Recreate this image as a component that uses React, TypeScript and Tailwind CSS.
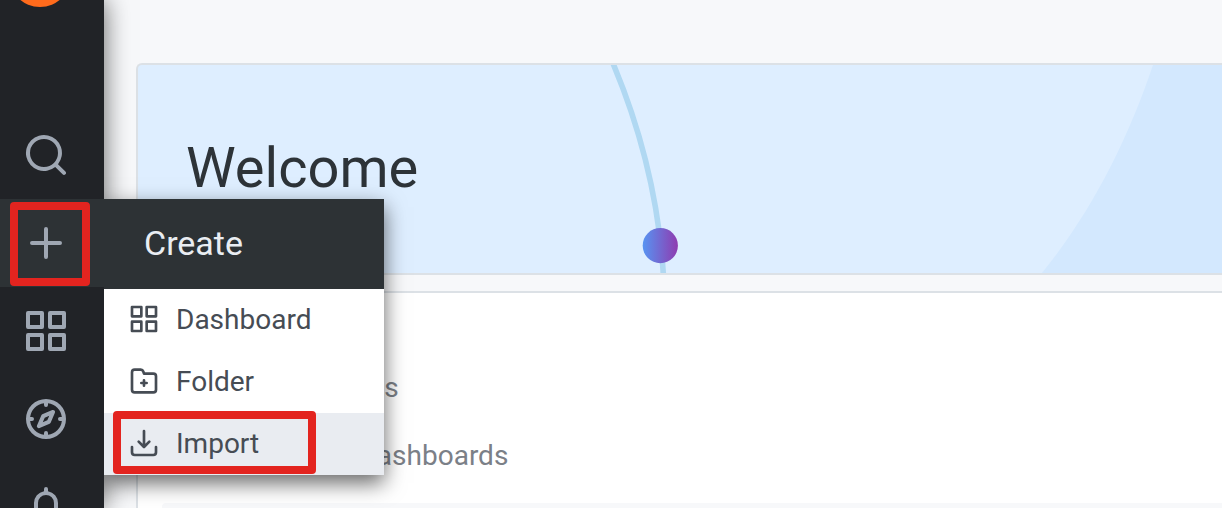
import React from "react";

const icons = {
  search:
    "M21.71,20.29,18,16.61A9,9,0,1,0,16.61,18l3.68,3.68a1,1,0,0,0,1.42,0A1,1,0,0,0,21.71,20.29ZM11,18a7,7,0,1,1,7-7A7,7,0,0,1,11,18Z",
  plus: "M19,11H13V5a1,1,0,0,0-2,0v6H5a1,1,0,0,0,0,2h6v6a1,1,0,0,0,2,0V13h6a1,1,0,0,0,0-2Z",
  apps: "M10,13H3a1,1,0,0,0-1,1v7a1,1,0,0,0,1,1h7a1,1,0,0,0,1-1V14A1,1,0,0,0,10,13ZM9,20H4V15H9ZM21,2H14a1,1,0,0,0-1,1v7a1,1,0,0,0,1,1h7a1,1,0,0,0,1-1V3A1,1,0,0,0,21,2ZM20,9H15V4h5Zm1,4H14a1,1,0,0,0-1,1v7a1,1,0,0,0,1,1h7a1,1,0,0,0,1-1V14A1,1,0,0,0,21,13Zm-1,7H15V15h5ZM10,2H3A1,1,0,0,0,2,3v7a1,1,0,0,0,1,1h7a1,1,0,0,0,1-1V3A1,1,0,0,0,10,2ZM9,9H4V4H9Z",
  compass:
    "M12,2A10,10,0,1,0,22,12,10,10,0,0,0,12,2Zm1,17.93V19a1,1,0,0,0-2,0v.93A8,8,0,0,1,4.07,13H5a1,1,0,0,0,0-2H4.07A8,8,0,0,1,11,4.07V5a1,1,0,0,0,2,0V4.07A8,8,0,0,1,19.93,11H19a1,1,0,0,0,0,2h.93A8,8,0,0,1,13,19.93ZM15.14,7.55l-5,2.12a1,1,0,0,0-.52.52l-2.12,5a1,1,0,0,0,.21,1.1,1,1,0,0,0,.7.29.93.93,0,0,0,.4-.08l5-2.12a1,1,0,0,0,.52-.52l2.12-5a1,1,0,0,0-1.31-1.31Zm-2.49,5.1-2.28,1,1-2.28,2.28-1Z",
  bell: "M18,13.18V10a6,6,0,0,0-5-5.91V3a1,1,0,0,0-2,0V4.09A6,6,0,0,0,6,10v3.18A3,3,0,0,0,4,16v2a1,1,0,0,0,1,1H8.14a4,4,0,0,0,7.72,0H19a1,1,0,0,0,1-1V16A3,3,0,0,0,18,13.18ZM8,10a4,4,0,0,1,8,0v3H8Zm4,10a2,2,0,0,1-1.72-1h3.44A2,2,0,0,1,12,20Zm6-3H6V16a1,1,0,0,1,1-1H17a1,1,0,0,1,1,1Z",
  folderPlus:
    "M14,12.5H13v-1a1,1,0,0,0-2,0v1H10a1,1,0,0,0,0,2h1v1a1,1,0,0,0,2,0v-1h1a1,1,0,0,0,0-2Zm5-7H12.72l-.32-1a3,3,0,0,0-2.84-2H5a3,3,0,0,0-3,3v13a3,3,0,0,0,3,3H19a3,3,0,0,0,3-3V8.5A3,3,0,0,0,19,5.5Zm1,13a1,1,0,0,1-1,1H5a1,1,0,0,1-1-1V5.5a1,1,0,0,1,1-1H9.56a1,1,0,0,1,.95.68l.54,1.64A1,1,0,0,0,12,7.5h7a1,1,0,0,1,1,1Z",
  import:
    "M21,14a1,1,0,0,0-1,1v4a1,1,0,0,1-1,1H5a1,1,0,0,1-1-1V15a1,1,0,0,0-2,0v4a3,3,0,0,0,3,3H19a3,3,0,0,0,3-3V15A1,1,0,0,0,21,14Zm-9.71,1.71a1,1,0,0,0,.33.21.94.94,0,0,0,.76,0,1,1,0,0,0,.33-.21l4-4a1,1,0,0,0-1.42-1.42L13,12.59V3a1,1,0,0,0-2,0v9.59l-2.29-2.3a1,1,0,1,0-1.42,1.42Z",
};

type IconName = keyof typeof icons;

function Icon({ name, className }: { name: IconName; className: string }) {
  return (
    <svg viewBox="0 0 24 24" fill="currentColor" aria-hidden="true" className={className}>
      <path d={icons[name]} />
    </svg>
  );
}

function Highlight({ className }: { className: string }) {
  return (
    <span
      aria-hidden="true"
      className={`pointer-events-none absolute rounded-[4px] border-8 border-[#e3241f] ${className}`}
    />
  );
}

function NavButton({ name, label }: { name: IconName; label: string }) {
  return (
    <button
      type="button"
      aria-label={label}
      className="flex h-[88px] w-full items-center pl-[22px] text-[#9fa7b3]"
    >
      <Icon name={name} className="size-12" />
    </button>
  );
}

const createItems: { icon: IconName; label: string; active?: boolean }[] = [
  { icon: "apps", label: "Dashboard" },
  { icon: "folderPlus", label: "Folder" },
  { icon: "import", label: "Import", active: true },
];

function CreateMenu() {
  return (
    <div className="absolute top-0 left-full w-[280px] bg-white shadow-[0_8px_20px_rgba(0,0,0,0.6)] [clip-path:inset(-40px_-40px_-40px_0)]">
      <div className="flex h-[90px] items-center bg-[#2d3235] pb-0.5 pl-10 text-[34px] text-[#e9edf2]">
        Create
      </div>
      <ul>
        {createItems.map((item) => (
          <li key={item.label} className={item.active ? "relative bg-[#e9ecf1]" : "relative"}>
            <a href="#" className="flex h-[62px] items-center gap-4 pb-0.5 pl-6 text-[28px] text-[#464c54]">
              <Icon name={item.icon} className="size-8" />
              <span className="pt-0.5">{item.label}</span>
            </a>
            {item.active && <Highlight className="-top-0.5 bottom-px left-[9px] w-[203px]" />}
          </li>
        ))}
      </ul>
    </div>
  );
}

function Sidebar() {
  return (
    <nav className="relative z-10 h-full w-[104px] shrink-0 bg-[#212327] shadow-[0_0_24px_rgba(0,0,0,0.6)]">
      <div className="h-[111px]">
        <svg viewBox="0 0 104 8" className="h-2 w-full" aria-hidden="true">
          <circle cx="40" cy="-24" r="31" fill="#ff6b1c" />
        </svg>
      </div>
      <ul>
        <li>
          <NavButton name="search" label="Search" />
        </li>
        <li className="relative bg-[#2d3235]">
          <NavButton name="plus" label="Create" />
          <Highlight className="top-[3px] bottom-px left-2.5 w-20" />
          <CreateMenu />
        </li>
        <li>
          <NavButton name="apps" label="Dashboards" />
        </li>
        <li>
          <NavButton name="compass" label="Explore" />
        </li>
        <li>
          <NavButton name="bell" label="Alerting" />
        </li>
      </ul>
    </nav>
  );
}

function WelcomeArt() {
  return (
    <svg
      viewBox="0 0 1084 208"
      preserveAspectRatio="xMinYMin slice"
      className="absolute inset-0 size-full"
      aria-hidden="true"
    >
      <defs>
        <linearGradient id="dot" x1="0" x2="1" y1="0" y2="0">
          <stop offset="0" stopColor="#5794f2" />
          <stop offset="1" stopColor="#8f3bb0" />
        </linearGradient>
      </defs>
      <path d="M1015 0C990 74 955 145 904 208H1084V0Z" fill="#d3e8fe" />
      <path d="M474 -4C502 62 521 135 525.5 212" fill="none" stroke="#b0d8f2" strokeWidth="5.6" />
      <circle cx="522.3" cy="180.6" r="17.6" fill="url(#dot)" />
    </svg>
  );
}

export default function App() {
  return (
    <div className="flex h-screen overflow-hidden bg-[#f7f8fa] font-[Roboto,sans-serif]">
      <Sidebar />
      <main className="flex min-w-0 flex-1 flex-col gap-4 pt-[63px] pl-8">
        <section className="relative h-[212px] shrink-0 overflow-hidden rounded-l-[6px] border-y-2 border-l-2 border-[#dce1e6] bg-[#deeeff]">
          <WelcomeArt />
          <h1 className="relative pt-[69px] pl-12 text-[56px] leading-[68px] text-[#2d3338]">Welcome</h1>
        </section>
        <section className="flex-1 rounded-l-[6px] border-t-2 border-l-2 border-[#dce1e6] bg-white pt-[61px] pl-4 text-[28px] leading-[68px] text-[#7b8087]">
          <h2>Starred dashboards</h2>
          <h2>Recently viewed dashboards</h2>
          <div className="mt-[13px] ml-2 h-10 rounded-l-[4px] bg-[#f7f8fa]" />
        </section>
      </main>
    </div>
  );
}
